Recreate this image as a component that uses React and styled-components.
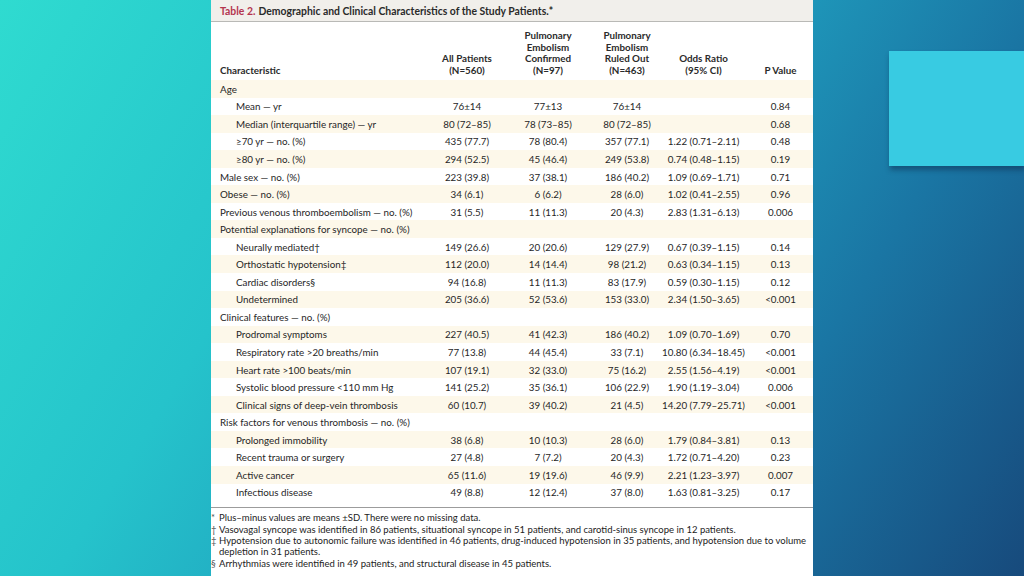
import React from "react";
import styled, { createGlobalStyle } from "styled-components";

const GlobalStyle = createGlobalStyle`
  html, body {
    margin: 0;
    padding: 0;
  }
  body {
    font-family: Lato, "Liberation Sans", sans-serif;
  }
`;

const Page = styled.div`
  width: 1024px;
  height: 576px;
  overflow: hidden;
  display: flex;
  align-items: flex-start;
  padding-left: 211px;
  box-sizing: border-box;
  background: linear-gradient(
    122deg,
    #2fdbd0 0%,
    #25c3cb 30%,
    #1f9cbd 55%,
    #1a76a4 75%,
    #174a7c 100%
  );
`;

const Panel = styled.div`
  width: 602px;
  height: 576px;
  flex-shrink: 0;
  background: #fff;
  display: flex;
  flex-direction: column;
  overflow: hidden;
  color: #262626;
`;

const TitleBar = styled.div`
  height: 22px;
  flex-shrink: 0;
  box-sizing: border-box;
  background: #f1efeb;
  border-bottom: 1px solid #b9b9b6;
  padding: 0 0 0 9px;
  display: flex;
  align-items: center;
  font-size: 10.4px;
  font-weight: 700;
  color: #2a2a2a;
`;

const TableLabel = styled.span`
  color: #b4344e;
  margin-right: 3px;
`;

const Table = styled.div`
  display: flex;
  flex-direction: column;
  padding-bottom: 6px;
  border-bottom: 1px solid #9c9c9c;
  flex-shrink: 0;
`;

const columns = "214px 84px 78px 80px 73px 81px";

const HeadRow = styled.div`
  display: grid;
  grid-template-columns: ${columns};
  height: 58px;
`;

const HeadCell = styled.div`
  box-sizing: border-box;
  padding: 0 0 4px ${(p) => (p.$left ? "9px" : "0")};
  display: flex;
  flex-direction: column;
  justify-content: flex-end;
  align-items: ${(p) => (p.$left ? "flex-start" : "center")};
  text-align: ${(p) => (p.$left ? "left" : "center")};
  font-size: 9.8px;
  font-weight: 700;
  line-height: 11.5px;
  color: #2b2b2b;
  white-space: nowrap;
`;

const Row = styled.div`
  display: grid;
  grid-template-columns: ${columns};
  height: 17.55px;
  background: ${(p) => (p.$shade ? "#fdf8ea" : "#fff")};
`;

const Cell = styled.div`
  display: flex;
  align-items: center;
  justify-content: ${(p) => (p.$left ? "flex-start" : "center")};
  padding-left: ${(p) => (p.$left ? (p.$indent ? "25px" : "9px") : "0")};
  font-size: 9.8px;
  white-space: nowrap;
`;

const Notes = styled.div`
  padding: 4px 0 0 0;
  font-size: 9.5px;
  line-height: 11.4px;
  color: #222;
`;

const Note = styled.div`
  display: flex;
`;

const Mark = styled.span`
  width: 8px;
  flex-shrink: 0;
  color: #555;
`;

const Square = styled.div`
  width: 135px;
  height: 115px;
  margin: 51px 0 0 76px;
  flex-shrink: 0;
  background: #38cbe2;
  box-shadow: 1px 4px 5px rgba(10, 40, 70, 0.45);
`;

const rows = [
  ["Age", 0, []],
  ["Mean — yr", 1, ["76±14", "77±13", "76±14", "", "0.84"]],
  ["Median (interquartile range) — yr", 1, ["80 (72–85)", "78 (73–85)", "80 (72–85)", "", "0.68"]],
  ["≥70 yr — no. (%)", 1, ["435 (77.7)", "78 (80.4)", "357 (77.1)", "1.22 (0.71–2.11)", "0.48"]],
  ["≥80 yr — no. (%)", 1, ["294 (52.5)", "45 (46.4)", "249 (53.8)", "0.74 (0.48–1.15)", "0.19"]],
  ["Male sex — no. (%)", 0, ["223 (39.8)", "37 (38.1)", "186 (40.2)", "1.09 (0.69–1.71)", "0.71"]],
  ["Obese — no. (%)", 0, ["34 (6.1)", "6 (6.2)", "28 (6.0)", "1.02 (0.41–2.55)", "0.96"]],
  ["Previous venous thromboembolism — no. (%)", 0, ["31 (5.5)", "11 (11.3)", "20 (4.3)", "2.83 (1.31–6.13)", "0.006"]],
  ["Potential explanations for syncope — no. (%)", 0, []],
  ["Neurally mediated†", 1, ["149 (26.6)", "20 (20.6)", "129 (27.9)", "0.67 (0.39–1.15)", "0.14"]],
  ["Orthostatic hypotension‡", 1, ["112 (20.0)", "14 (14.4)", "98 (21.2)", "0.63 (0.34–1.15)", "0.13"]],
  ["Cardiac disorders§", 1, ["94 (16.8)", "11 (11.3)", "83 (17.9)", "0.59 (0.30–1.15)", "0.12"]],
  ["Undetermined", 1, ["205 (36.6)", "52 (53.6)", "153 (33.0)", "2.34 (1.50–3.65)", "<0.001"]],
  ["Clinical features — no. (%)", 0, []],
  ["Prodromal symptoms", 1, ["227 (40.5)", "41 (42.3)", "186 (40.2)", "1.09 (0.70–1.69)", "0.70"]],
  ["Respiratory rate >20 breaths/min", 1, ["77 (13.8)", "44 (45.4)", "33 (7.1)", "10.80 (6.34–18.45)", "<0.001"]],
  ["Heart rate >100 beats/min", 1, ["107 (19.1)", "32 (33.0)", "75 (16.2)", "2.55 (1.56–4.19)", "<0.001"]],
  ["Systolic blood pressure <110 mm Hg", 1, ["141 (25.2)", "35 (36.1)", "106 (22.9)", "1.90 (1.19–3.04)", "0.006"]],
  ["Clinical signs of deep-vein thrombosis", 1, ["60 (10.7)", "39 (40.2)", "21 (4.5)", "14.20 (7.79–25.71)", "<0.001"]],
  ["Risk factors for venous thrombosis — no. (%)", 0, []],
  ["Prolonged immobility", 1, ["38 (6.8)", "10 (10.3)", "28 (6.0)", "1.79 (0.84–3.81)", "0.13"]],
  ["Recent trauma or surgery", 1, ["27 (4.8)", "7 (7.2)", "20 (4.3)", "1.72 (0.71–4.20)", "0.23"]],
  ["Active cancer", 1, ["65 (11.6)", "19 (19.6)", "46 (9.9)", "2.21 (1.23–3.97)", "0.007"]],
  ["Infectious disease", 1, ["49 (8.8)", "12 (12.4)", "37 (8.0)", "1.63 (0.81–3.25)", "0.17"]],
];

const headers = [
  ["All Patients", "(N=560)"],
  ["Pulmonary", "Embolism", "Confirmed", "(N=97)"],
  ["Pulmonary", "Embolism", "Ruled Out", "(N=463)"],
  ["Odds Ratio", "(95% CI)"],
  ["P Value"],
];

const notes = [
  ["*", "Plus–minus values are means ±SD. There were no missing data."],
  ["†", "Vasovagal syncope was identified in 86 patients, situational syncope in 51 patients, and carotid-sinus syncope in 12 patients."],
  ["‡", "Hypotension due to autonomic failure was identified in 46 patients, drug-induced hypotension in 35 patients, and hypotension due to volume depletion in 31 patients."],
  ["§", "Arrhythmias were identified in 49 patients, and structural disease in 45 patients."],
];

export default function App() {
  return (
    <>
      <GlobalStyle />
      <Page>
        <Panel>
          <TitleBar>
            <TableLabel>Table 2.</TableLabel>
            Demographic and Clinical Characteristics of the Study Patients.*
          </TitleBar>
          <Table>
            <HeadRow>
              <HeadCell $left>Characteristic</HeadCell>
              {headers.map((lines, i) => (
                <HeadCell key={i}>
                  {lines.map((l) => (
                    <div key={l}>{l}</div>
                  ))}
                </HeadCell>
              ))}
            </HeadRow>
            {rows.map(([label, level, cells], i) => (
              <Row key={label} $shade={i % 2 === 0}>
                <Cell $left $indent={level === 1}>
                  {label}
                </Cell>
                {cells.map((v, j) => (
                  <Cell key={j}>{v}</Cell>
                ))}
              </Row>
            ))}
          </Table>
          <Notes>
            {notes.map(([m, t]) => (
              <Note key={m}>
                <Mark>{m}</Mark>
                <span>{t}</span>
              </Note>
            ))}
          </Notes>
        </Panel>
        <Square />
      </Page>
    </>
  );
}
